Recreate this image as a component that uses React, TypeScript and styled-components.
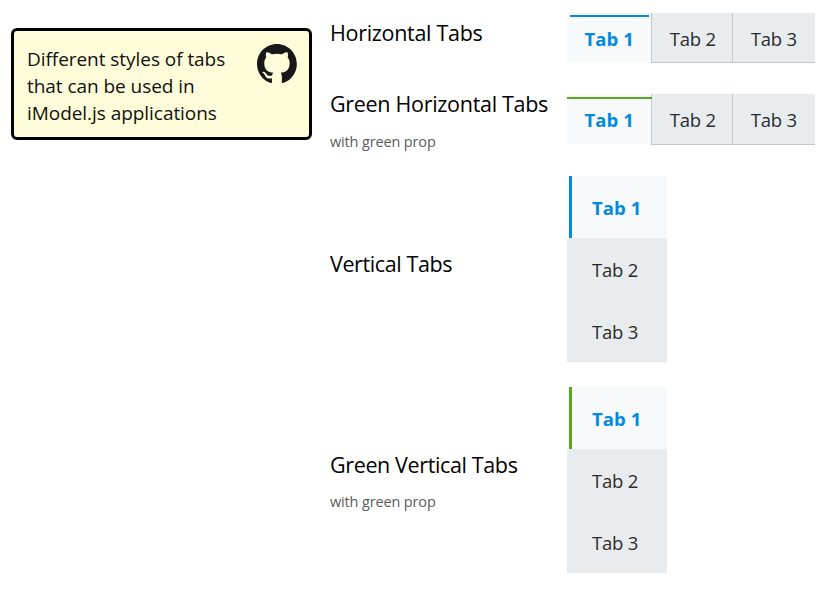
import React from "react";
import styled, { createGlobalStyle } from "styled-components";

const GlobalStyle = createGlobalStyle`
  * { box-sizing: border-box; }
  body { margin: 0; background: #fff; color: #000; font-family: "Open Sans", "Noto Sans", sans-serif; }
`;

const Page = styled.main`
  display: grid;
  grid-template-columns: 301px 1fr;
  column-gap: 18px;
  align-items: start;
  width: 832px;
  height: 610px;
  padding: 13px 0 0 11px;
  overflow: hidden;
`;

const NoteCard = styled.aside`
  display: flex;
  justify-content: space-between;
  height: 112px;
  margin-top: 15px;
  padding: 13px 12px 0 13px;
  border: 3px solid #000;
  border-radius: 6px;
  background: #fffcd9;
`;

const NoteText = styled.p`
  margin: 2px 0 0;
  font-size: 19px;
  line-height: 27px;
  letter-spacing: -0.05px;
  color: #111;
`;

const Line = styled.span`
  display: block;
  white-space: nowrap;
`;

const GithubMark = styled.svg`
  flex: none;
  width: 40px;
  height: 39px;
  fill: #191717;
`;

const Examples = styled.div`
  display: flex;
  flex-direction: column;
`;

const Example = styled.section<{ $height: number; $gap: number }>`
  display: grid;
  grid-template-columns: 237px auto;
  justify-content: start;
  align-items: start;
  height: ${(p) => p.$height}px;
  margin-bottom: ${(p) => p.$gap}px;
`;

const Caption = styled.div<{ $top: number }>`
  margin-top: ${(p) => p.$top}px;
`;

const Title = styled.h2<{ $tracking?: number }>`
  margin: 0;
  font-size: 21.5px;
  font-weight: 400;
  line-height: 30px;
  white-space: nowrap;
  letter-spacing: ${(p) => p.$tracking ?? -0.3}px;
`;

const Detail = styled.p<{ $gap: number }>`
  margin: ${(p) => p.$gap}px 0 0;
  font-size: 14.5px;
  line-height: 20px;
  letter-spacing: -0.15px;
  color: #5c5c5c;
`;

const HorizontalBar = styled.div<{ $height: number }>`
  display: grid;
  grid-template-columns: 84px 81px 83px;
  height: ${(p) => p.$height}px;
`;

const HorizontalTab = styled.button<{ $active?: boolean }>`
  position: relative;
  display: block;
  height: ${(p) => (p.$active ? "calc(100% - 1px)" : "100%")};
  padding: 2px 0 0 ${(p) => (p.$active ? 17.5 : 17.8)}px;
  border: 0;
  border-left: ${(p) => (p.$active ? "0" : "1px solid #c1c8cc")};
  border-bottom: ${(p) => (p.$active ? "0" : "1px solid #c1c8cc")};
  background: ${(p) => (p.$active ? "#f8f9fb" : "#e8ecef")};
  color: ${(p) => (p.$active ? "#008be1" : "#2b2b2b")};
  font: ${(p) => (p.$active ? 700 : 400)} 18.5px/26px "Open Sans", "Noto Sans", sans-serif;
  letter-spacing: ${(p) => (p.$active ? 0.1 : -0.2)}px;
  text-align: left;
  white-space: nowrap;
`;

const TopStripe = styled.span<{ $green?: boolean }>`
  position: absolute;
  z-index: 1;
  top: ${(p) => (p.$green ? 3 : 2)}px;
  left: ${(p) => (p.$green ? 0 : 3)}px;
  width: ${(p) => (p.$green ? 85 : 79)}px;
  height: 2px;
  background: ${(p) => (p.$green ? "#56a91c" : "#008be1")};
`;

const VerticalBar = styled.div`
  display: flex;
  flex-direction: column;
  width: 100px;
`;

const VerticalTab = styled.button<{ $active?: boolean }>`
  position: relative;
  height: 62px;
  padding: 2px 0 0 25px;
  border: 0;
  background: ${(p) => (p.$active ? "#f8f9fb" : "#e8ecef")};
  color: ${(p) => (p.$active ? "#008be1" : "#2b2b2b")};
  font: ${(p) => (p.$active ? 700 : 400)} 18.5px/26px "Open Sans", "Noto Sans", sans-serif;
  letter-spacing: ${(p) => (p.$active ? 0.1 : -0.2)}px;
  text-align: left;
  white-space: nowrap;
`;

const SideStripe = styled.span<{ $green?: boolean }>`
  position: absolute;
  top: 0;
  bottom: 0;
  left: 0;
  width: 5px;
  border-left: 2px solid #fff;
  background: ${(p) => (p.$green ? "#56a91c" : "#008be1")};
`;

const tabs = ["Tab 1", "Tab 2", "Tab 3"];

function HorizontalTabs({ green }: { green?: boolean }) {
  return (
    <HorizontalBar $height={green ? 51 : 50}>
      {tabs.map((tab, i) => (
        <HorizontalTab key={tab} $active={i === 0}>
          {i === 0 && <TopStripe $green={green} />}
          {tab}
        </HorizontalTab>
      ))}
    </HorizontalBar>
  );
}

function VerticalTabs({ green }: { green?: boolean }) {
  return (
    <VerticalBar>
      {tabs.map((tab, i) => (
        <VerticalTab key={tab} $active={i === 0}>
          {i === 0 && <SideStripe $green={green} />}
          {tab}
        </VerticalTab>
      ))}
    </VerticalBar>
  );
}

export default function App() {
  return (
    <>
      <GlobalStyle />
      <Page>
        <NoteCard>
          <NoteText>
            <Line>Different styles of tabs</Line>
            <Line>that can be used in</Line>
            <Line>iModel.js applications</Line>
          </NoteText>
          <GithubMark viewBox="0 0 98 96" preserveAspectRatio="none" aria-label="GitHub">
            <path
              fillRule="evenodd"
              clipRule="evenodd"
              d="M48.854 0C21.839 0 0 22 0 49.217c0 21.756 13.993 40.172 33.405 46.69 2.427.49 3.316-1.059 3.316-2.362 0-1.141-.08-5.052-.08-9.127-13.59 2.934-16.42-5.867-16.42-5.867-2.184-5.704-5.42-7.17-5.42-7.17-4.448-3.015.324-3.015.324-3.015 4.934.326 7.523 5.052 7.523 5.052 4.367 7.496 11.404 5.378 14.235 4.074.404-3.178 1.699-5.378 3.074-6.6-10.839-1.141-22.243-5.378-22.243-24.283 0-5.378 1.94-9.778 5.014-13.2-.485-1.222-2.184-6.275.486-13.038 0 0 4.125-1.304 13.426 5.052a46.97 46.97 0 0 1 12.214-1.63c4.125 0 8.33.571 12.213 1.63 9.302-6.356 13.427-5.052 13.427-5.052 2.67 6.763.97 11.816.485 13.038 3.155 3.422 5.015 7.822 5.015 13.2 0 18.905-11.404 23.06-22.324 24.283 1.78 1.548 3.316 4.481 3.316 9.126 0 6.6-.08 11.897-.08 13.526 0 1.304.89 2.853 3.316 2.364 19.412-6.52 33.405-24.935 33.405-46.691C97.707 22 75.788 0 48.854 0z"
            />
          </GithubMark>
        </NoteCard>
        <Examples>
          <Example $height={50} $gap={31}>
            <Caption $top={5}>
              <Title>Horizontal Tabs</Title>
            </Caption>
            <HorizontalTabs />
          </Example>
          <Example $height={51} $gap={31}>
            <Caption $top={-5}>
              <Title>Green Horizontal Tabs</Title>
              <Detail $gap={13}>with green prop</Detail>
            </Caption>
            <HorizontalTabs green />
          </Example>
          <Example $height={186} $gap={25}>
            <Caption $top={73}>
              <Title $tracking={-0.39}>Vertical Tabs</Title>
            </Caption>
            <VerticalTabs />
          </Example>
          <Example $height={186} $gap={0}>
            <Caption $top={63}>
              <Title $tracking={-0.37}>Green Vertical Tabs</Title>
              <Detail $gap={12}>with green prop</Detail>
            </Caption>
            <VerticalTabs green />
          </Example>
        </Examples>
      </Page>
    </>
  );
}
